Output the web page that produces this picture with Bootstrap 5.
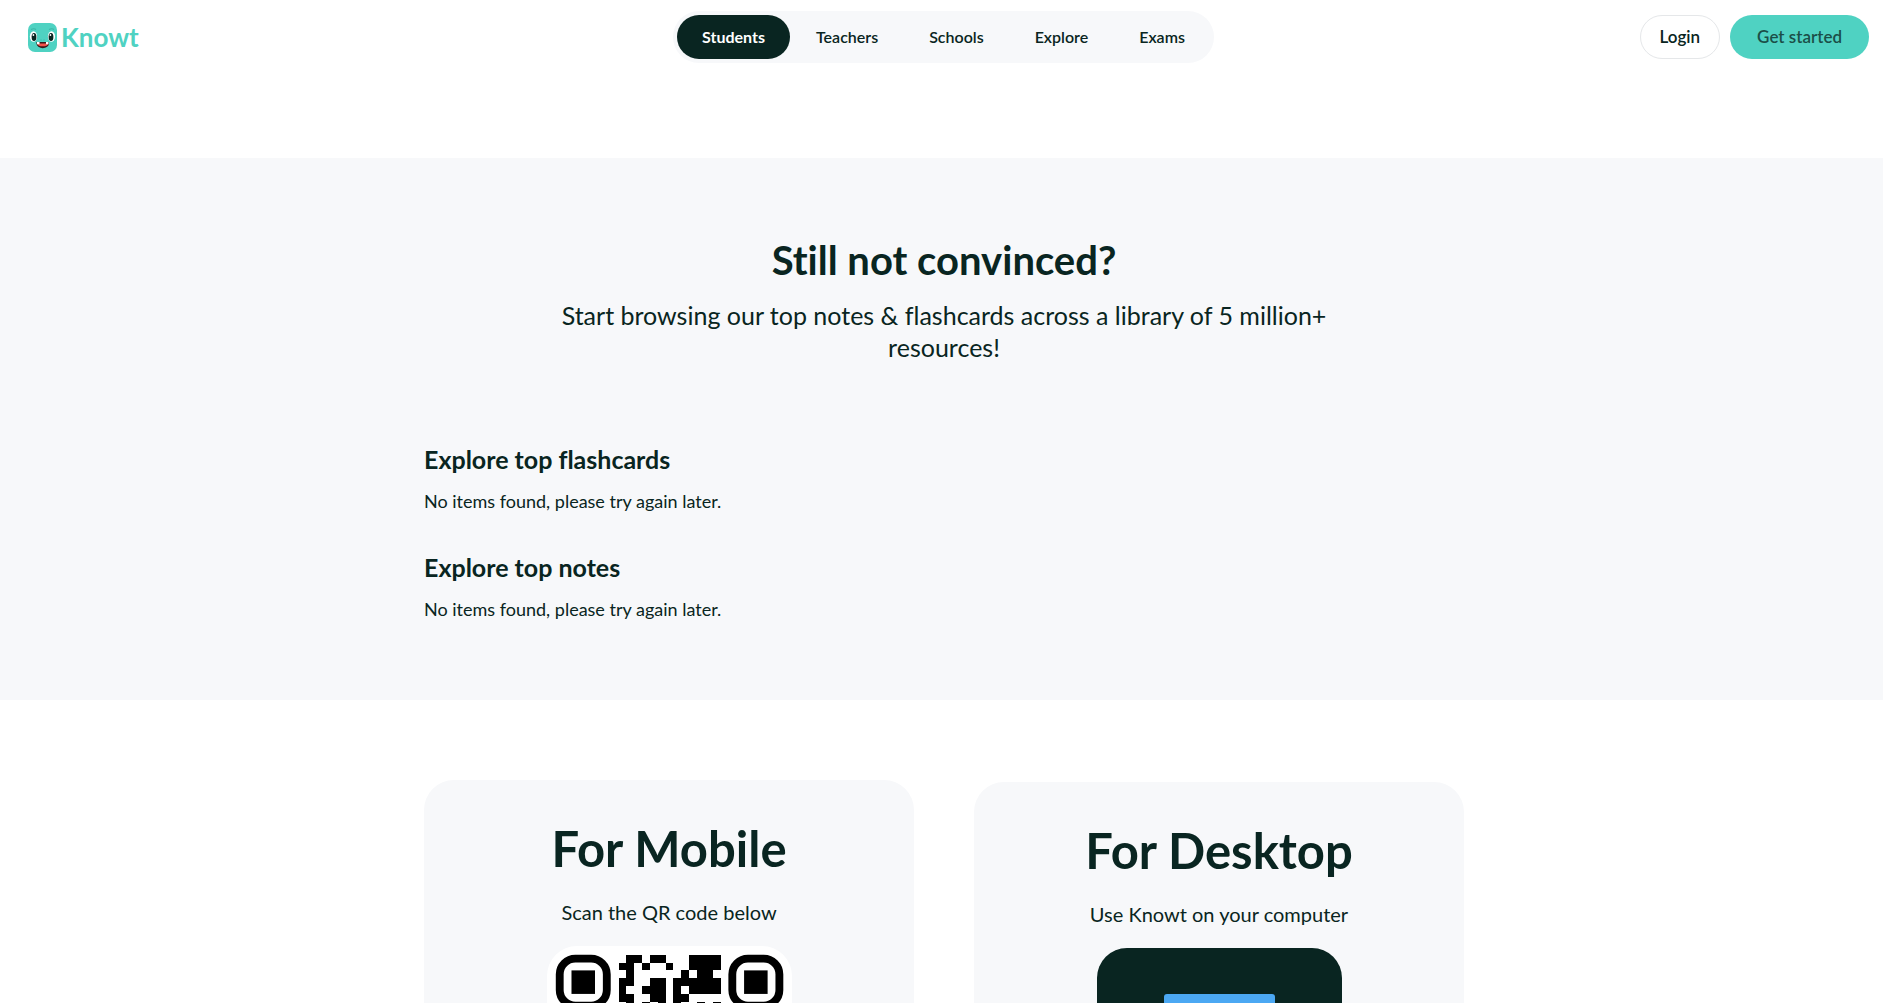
<!DOCTYPE html>
<html lang="en">
<head>
<meta charset="utf-8">
<meta name="viewport" content="width=device-width, initial-scale=1">
<title>Knowt</title>
<link href="https://cdn.jsdelivr.net/npm/bootstrap@5.3.0/dist/css/bootstrap.min.css" rel="stylesheet">
<style>
  :root { --ink: #092521; --teal: #4fd2c2; --mist: #f7f8fa; }
  body { font-family: Lato, "Liberation Sans", sans-serif; font-variant-ligatures: none; color: var(--ink); background: #fff; }
  .site-header { display: grid; grid-template-columns: 1fr auto 1fr; align-items: center; padding: 11px 14px 0 18px; }
  .brand { color: var(--teal); font-size: 26px; font-weight: 700; line-height: 30px; gap: 4px; margin-left: 10px; }
  .main-nav { background: var(--mist); border-radius: 26px; padding: 4px; gap: 1px; }
  .main-nav .nav-link { color: var(--ink); font-size: 16px; font-weight: 600; line-height: 20px; padding: 12px 25px; border-radius: 22px; }
  .main-nav .nav-link.active { background: var(--ink); color: #fff; font-weight: 700; }
  .pill { height: 44px; border-radius: 22px; font-size: 17px; font-weight: 600; line-height: 20px; color: var(--ink); }
  .pill-login { border: 1px solid #e5e7e9; background: #fff; padding: 0 19px; }
  .pill-start { background: var(--teal); color: #1b4f48; border: 0; padding: 0 27px; }
  .library { background: var(--mist); margin-top: 95px; padding: 78px 0 77px 5px; }
  .column { max-width: 1040px; margin: 0 auto; }
  .library h2 { font-size: 40px; font-weight: 700; line-height: 48px; margin-bottom: 15px; }
  .intro { font-size: 25px; line-height: 32px; max-width: 800px; margin: 0 auto 80px; }
  .library h3 { font-size: 25px; font-weight: 700; line-height: 32px; margin-bottom: 12px; }
  .library .empty-note { font-size: 18px; line-height: 28px; margin-bottom: 36px; }
  .apps { padding: 80px 0 80px 5px; }
  .apps .column { display: flex; gap: 60px; align-items: flex-start; }
  .app-card { flex: 1; background: var(--mist); border-radius: 30px; padding: 38px 24px 60px; text-align: center; }
  .app-card.desktop { margin-top: 2px; }
  .app-card h2 { font-size: 49px; font-weight: 700; line-height: 60px; margin-bottom: 20px; }
  .app-card p { font-size: 20px; line-height: 28px; margin-bottom: 20px; }
  .tile { width: 245px; height: 245px; display: block; margin: 0 auto; }
</style>
</head>
<body>
<header class="site-header">
  <a href="#" class="brand d-inline-flex align-items-center text-decoration-none">
    <svg width="29" height="29" viewBox="0 0 29 29" aria-hidden="true">
      <rect width="29" height="29" rx="7" fill="#4fd2c2"/>
      <path d="M3 6.500q3-1.500 5 0M21 6.500q3-1.500 5 0" stroke="#3bb5a6" stroke-width="1.200" fill="none"/>
      <ellipse cx="5.500" cy="13.500" rx="3.600" ry="5.200" fill="#fff"/><ellipse cx="23.500" cy="13.500" rx="3.600" ry="5.200" fill="#fff"/>
      <ellipse cx="6" cy="14" rx="2.400" ry="4" fill="#092521"/><ellipse cx="23" cy="14" rx="2.400" ry="4" fill="#092521"/>
      <circle cx="5.400" cy="12" r=".9" fill="#fff"/><circle cx="22.400" cy="12" r=".9" fill="#fff"/>
      <path d="M13 16.500v1M16 16.500v1" stroke="#3bb5a6"/>
      <path d="M8.500 19h12.500v1.500a6 4.500 0 0 1-12.500 0z" fill="#3b1a1a"/>
      <path d="M9 20.500h11.500a6 4 0 0 1-11.500 0z" fill="#f2524b"/><path d="M9 19h2.500v2.200H9zM18 19h2.500v2.200H18z" fill="#fff"/>
    </svg>
    <span>Knowt</span>
  </a>
  <nav class="main-nav nav" aria-label="Main">
    <a class="nav-link active" href="#" aria-current="page">Students</a>
    <a class="nav-link" href="#">Teachers</a>
    <a class="nav-link" href="#">Schools</a>
    <a class="nav-link" href="#">Explore</a>
    <a class="nav-link" href="#">Exams</a>
  </nav>
  <div class="d-flex justify-content-end" style="gap:10px">
    <button type="button" class="pill pill-login">Login</button>
    <button type="button" class="pill pill-start">Get started</button>
  </div>
</header>
<main>
  <section class="library">
    <div class="column">
      <h2 class="text-center">Still not convinced?</h2>
      <p class="intro text-center">Start browsing our top notes &amp; flashcards across a library of 5 million+ resources!</p>
      <h3>Explore top flashcards</h3>
      <p class="empty-note">No items found, please try again later.</p>
      <h3>Explore top notes</h3>
      <p class="empty-note mb-0">No items found, please try again later.</p>
    </div>
  </section>
  <section class="apps">
    <div class="column">
      <article class="app-card">
        <h2>For Mobile</h2>
        <p>Scan the QR code below</p>
        <svg class="tile" viewBox="0 0 245 245" role="img" aria-label="QR code">
          <defs>
            <g id="finder"><rect x=".5" y=".5" width="6" height="6" rx="2" fill="none" stroke="#000"/><path d="M2 2h3v3H2z"/></g>
          </defs>
          <rect width="245" height="245" rx="30" fill="#fff"/>
          <g transform="translate(8.800 8.700) scale(7.845)">
            <use href="#finder"/><use href="#finder" x="22"/><use href="#finder" y="22"/>
            <path shape-rendering="crispEdges" d="M9 0h2v1H9zM12 0h2v1h-2zM17 0h4v2h-4zM8 1h2v1H8zM11 1h1v1h-1zM14 1h1v1h-1zM9 2h1v1H9zM16 2h1v1h-1zM18 2h2v1h-2zM8 3h2v1H8zM12 3h2v3h-2zM15 3h2v1h-2zM17 3h4v1h-4zM8 4h1v1H8zM11 4h1v1h-1zM15 4h1v1h-1zM17 4h4v1h-4zM8 5h2v1H8zM15 5h2v1h-2zM9 6h1v1H9zM11 6h1v1h-1zM13 6h1v1h-1zM15 6h1v1h-1zM18 6h1v1h-1zM20 6h1v1h-1z"/>
          </g>
        </svg>
      </article>
      <article class="app-card desktop">
        <h2>For Desktop</h2>
        <p>Use Knowt on your computer</p>
        <svg class="tile" viewBox="0 0 245 245" role="img" aria-label="Desktop computer">
          <rect width="245" height="245" rx="30" fill="#092521"/>
          <rect x="67" y="46" width="111" height="80" rx="3" fill="#4ba8f3"/>
        </svg>
      </article>
    </div>
  </section>
</main>
<script src="https://cdn.jsdelivr.net/npm/bootstrap@5.3.0/dist/js/bootstrap.bundle.min.js"></script>
</body>
</html>
